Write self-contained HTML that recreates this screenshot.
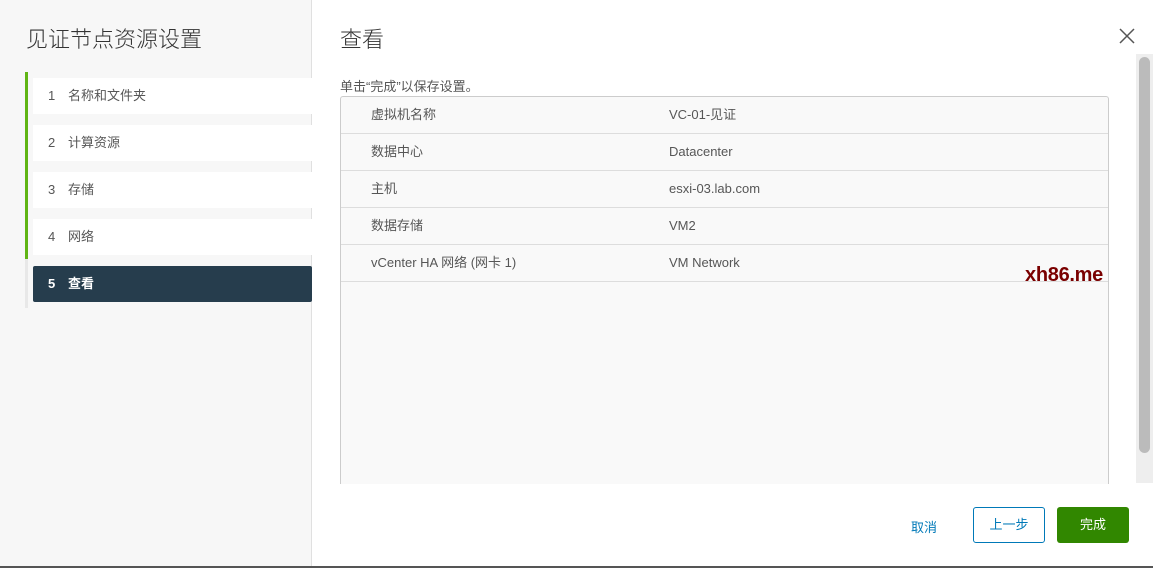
<!DOCTYPE html>
<html><head><meta charset="utf-8"><style>
*{margin:0;padding:0;box-sizing:border-box}
body{width:1153px;height:568px;overflow:hidden;background:#fff;font-family:"Liberation Sans","Noto Sans CJK SC",sans-serif;position:relative;color:#565656}
.abs{position:absolute}
#left{left:0;top:0;width:312px;height:566px;background:#f7f7f7;border-right:1px solid #e0e0e0}
.bar{left:25px;width:3px}
.it{left:33px;width:279px;height:36px;background:#fff;font-size:13px;line-height:36px;padding-left:15px;color:#565656}
.it b{font-weight:normal;display:inline-block;width:20px}
.row{left:341px;width:767px;height:37px;border-bottom:1px solid #ddd;font-size:13px;line-height:36px;color:#565656}
.row span{position:absolute;left:30px}
.row i{font-style:normal;position:absolute;left:328px}
</style></head><body>
<div class="abs" id="left"></div>
<div class="abs" style="left:26px;top:22px;font-size:22px;color:#333;font-weight:300">见证节点资源设置</div>
<div class="abs bar" style="top:72px;height:187px;background:#60b515"></div>
<div class="abs bar" style="top:259px;height:49px;background:#e8e8e8"></div>
<div class="abs it" style="top:78px"><b>1</b>名称和文件夹</div>
<div class="abs it" style="top:125px"><b>2</b>计算资源</div>
<div class="abs it" style="top:172px"><b>3</b>存储</div>
<div class="abs it" style="top:219px"><b>4</b>网络</div>
<div class="abs it" style="top:266px;background:#263d4d;color:#fff;font-weight:bold;border-radius:2px"><b style="font-weight:bold">5</b>查看</div>
<div class="abs" style="left:340px;top:22px;font-size:22px;color:#333;font-weight:300">查看</div>
<svg class="abs" style="left:1119px;top:28px" width="16" height="16"><path d="M1 1L15 15M15 1L1 15" stroke="#555" stroke-width="1.5"/></svg>
<div class="abs" style="left:340px;top:76px;font-size:13px;color:#565656">单击“完成”以保存设置。</div>
<div class="abs" style="left:340px;top:96px;width:769px;height:388px;background:#f9f9f9;border:1px solid #ccc;border-bottom:none;border-radius:3px 3px 0 0"></div>
<div class="abs row" style="top:97px"><span>虚拟机名称</span><i>VC-01-见证</i></div>
<div class="abs row" style="top:134px"><span>数据中心</span><i>Datacenter</i></div>
<div class="abs row" style="top:171px"><span>主机</span><i>esxi-03.lab.com</i></div>
<div class="abs row" style="top:208px"><span>数据存储</span><i>VM2</i></div>
<div class="abs row" style="top:245px"><span>vCenter HA 网络 (网卡 1)</span><i>VM Network</i></div>
<div class="abs" style="left:1025px;top:264px;font-size:20px;font-weight:bold;color:#7a0000;letter-spacing:-0.3px">xh86.me</div>
<div class="abs" style="left:1136px;top:54px;width:17px;height:429px;background:#eee"></div>
<div class="abs" style="left:1139px;top:57px;width:11px;height:396px;background:#bbb;border-radius:6px"></div>
<div class="abs" style="left:911px;top:517px;font-size:13px;color:#0079b8">取消</div>
<div class="abs" style="left:973px;top:507px;width:72px;height:36px;border:1px solid #0079b8;border-radius:3px;color:#0079b8;font-size:13px;line-height:34px;text-align:center">上一步</div>
<div class="abs" style="left:1057px;top:507px;width:72px;height:36px;background:#318700;border-radius:3px;color:#fff;font-size:13px;line-height:36px;text-align:center">完成</div>
<div class="abs" style="left:0;top:566px;width:1153px;height:2px;background:#555"></div>
</body></html>
